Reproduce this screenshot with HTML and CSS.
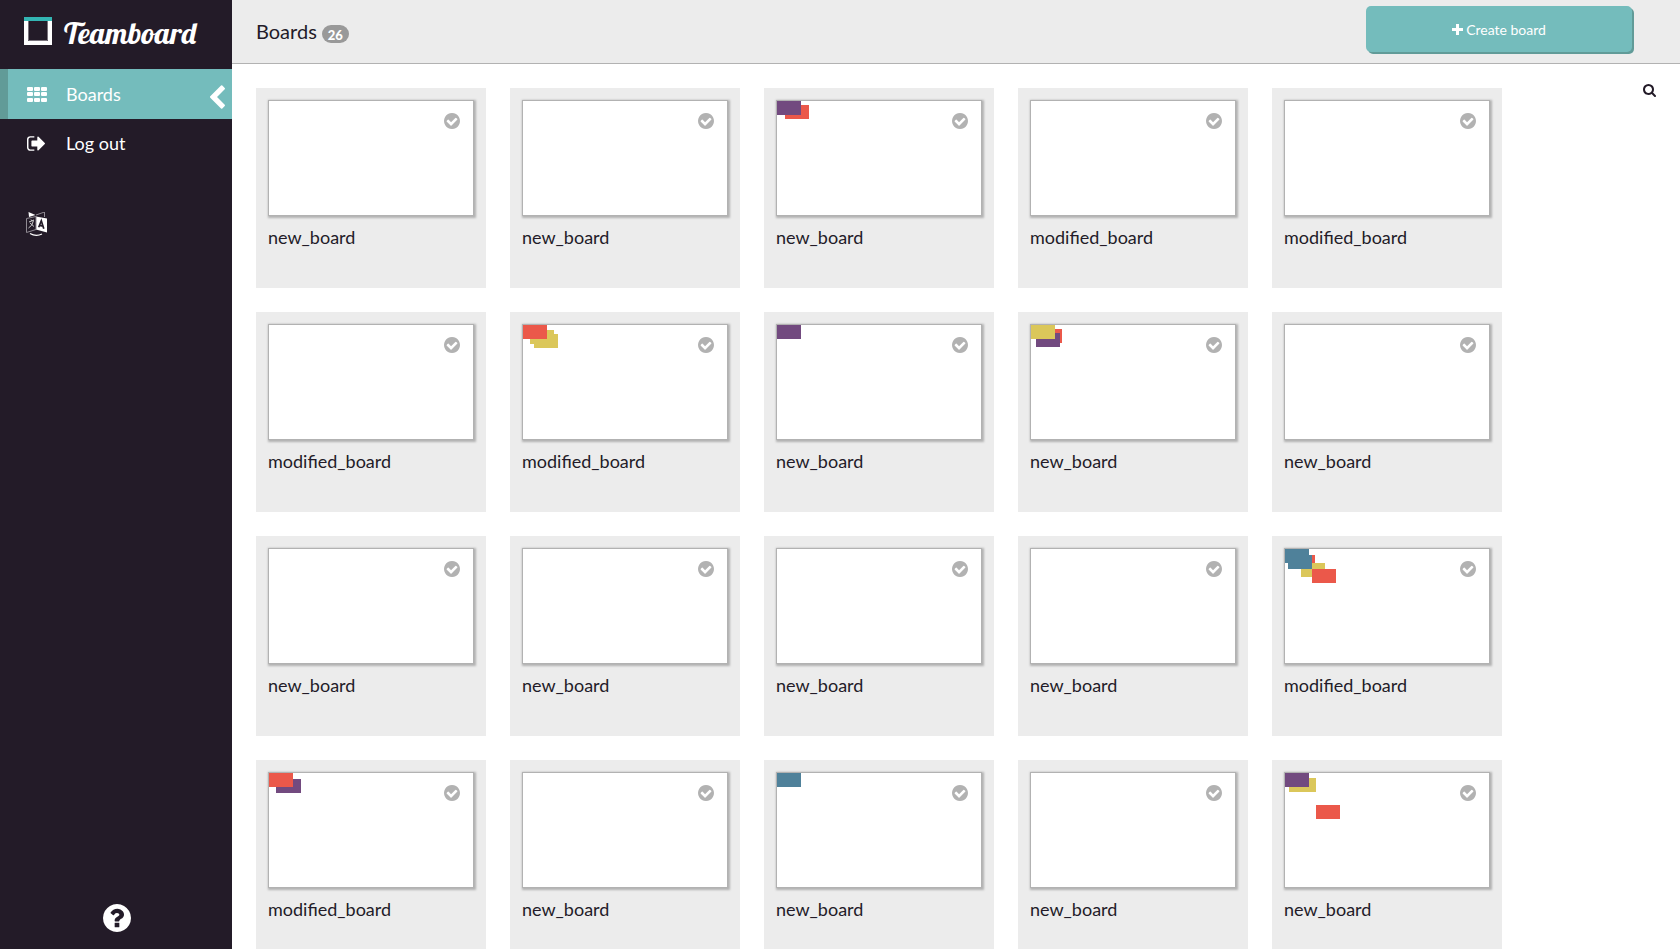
FILE: index.html
```
<!DOCTYPE html>
<html lang="en">
<head>
<meta charset="utf-8">
<title>Teamboard</title>
<link rel="stylesheet" href="styles.css">
</head>
<body>
<svg class="sprite" aria-hidden="true">
  <symbol id="check" viewBox="0 0 1536 1536"><path d="M1284 606q0-28-18-46l-91-90q-19-19-45-19t-45 19l-408 407-226-226q-19-19-45-19t-45 19l-91 90q-18 18-18 46 0 27 18 45l362 362q19 19 45 19 27 0 46-19l543-543q18-18 18-45zm252 162q0 209-103 385.500t-279.500 279.500-385.500 103-385.500-103-279.500-279.500-103-385.500 103-385.500 279.500-279.500 385.500-103 385.500 103 279.500 279.500 103 385.500z"/></symbol>
</svg>
<div class="app">
  <aside class="sidebar">
    <a class="brand" href="#">
      <svg class="brand-mark" viewBox="0 0 28 28" aria-hidden="true"><path fill="#fff" fill-rule="evenodd" d="M0 0h28v28H0zM4 4v20h20V4z"/><path fill="none" stroke="#79737c" d="M4.500 4v19.500h19V4"/><path fill="#33b5b3" d="M0 0h28v4H0z"/></svg>
      <span class="brand-name">Teamboard</span>
    </a>
    <nav class="nav">
      <a class="nav-item active" href="#">
        <span class="nav-icon"><svg width="20" height="15" viewBox="0 0 20 15" aria-hidden="true"><g fill="currentColor"><rect width="6" height="4" rx="1"/><rect x="7" width="6" height="4" rx="1"/><rect x="14" width="6" height="4" rx="1"/><rect y="5" width="6" height="4" rx="1"/><rect x="7" y="5" width="6" height="4" rx="1"/><rect x="14" y="5" width="6" height="4" rx="1"/><rect y="11" width="6" height="4" rx="1"/><rect x="7" y="11" width="6" height="4" rx="1"/><rect x="14" y="11" width="6" height="4" rx="1"/></g></svg></span>
        <span class="nav-label">Boards</span>
        <svg class="chevron" viewBox="410 26 1036 1612" aria-hidden="true"><path fill="currentColor" d="M1427 301l-531 531 531 531q19 19 19 45t-19 45l-166 166q-19 19-45 19t-45-19l-742-742q-19-19-19-45t19-45l742-742q19-19 45-19t45 19l166 166q19 19 19 45t-19 45z"/></svg>
      </a>
      <a class="nav-item" href="#">
        <span class="nav-icon"><svg width="18" height="15" viewBox="64 250 1568 1292" aria-hidden="true"><path fill="currentColor" d="M704 1440q0 4 1 20t.5 26.500-3 23.500-10 19.500-20.500 6.500h-320q-119 0-203.500-84.500t-84.500-203.500v-704q0-119 84.500-203.500t203.500-84.500h320q13 0 22.500 9.500t9.500 22.500q0 4 1 20t.5 26.500-3 23.500-10 19.500-20.500 6.500h-320q-66 0-113 47t-47 113v704q0 66 47 113t113 47h312l11.500 1 11.500 3 8 5.500 7 9 2 13.500zm928-544q0 26-19 45l-544 544q-19 19-45 19t-45-19-19-45v-288h-448q-26 0-45-19t-19-45v-384q0-26 19-45t45-19h448v-288q0-26 19-45t45-19 45 19l544 544q19 19 19 45z"/></svg></span>
        <span class="nav-label">Log out</span>
      </a>
    </nav>
    <button class="language" type="button" aria-label="Language">
      <svg width="21" height="24" viewBox="0 0 21 24" aria-hidden="true"><path fill="#fff" d="M2.500 0 9.500 3 3 5zM10 4.500l11 2V20.500l-11-3z"/><path fill="none" stroke="#8f8a92" d="M10 4.500.5 6.500v14l9.500-3zM10 3l8.500-3v5"/><path fill="none" stroke="#ccc" d="M3 10l5-2M5 7.500l1 1.500M7.500 8.500Q6.500 14 2.500 16M4 11l4 3.500"/><path fill="none" stroke="#fff" stroke-width="1.200" d="M4 21.500q6 3.500 12 .5"/><path fill="none" stroke="#231b28" stroke-width="1.700" d="M12.700 15.200 15.300 8.700l2.500 8M13.500 13.300l3.700.8"/></svg>
    </button>
    <button class="help" type="button" aria-label="Help">
      <svg width="28" height="28" viewBox="0 0 1536 1536" aria-hidden="true"><path fill="currentColor" d="M896 1248v-192q0-14-9-23t-23-9h-192q-14 0-23 9t-9 23v192q0 14 9 23t23 9h192q14 0 23-9t9-23zm256-672q0-88-55.500-163t-138.500-116-170-41q-243 0-371 213-15 24 8 42l132 100q7 6 19 6 16 0 25-12 53-68 86-92 34-24 86-24 48 0 85.500 26t37.500 59q0 38-20 61t-68 45q-63 28-115.500 86.500t-52.500 125.500v36q0 14 9 23t23 9h192q14 0 23-9t9-23q0-19 21.500-49.500t54.500-49.500q32-18 49-28.500t46-35 44.500-48 28-60.500 12.500-81zm384 192q0 209-103 385.500t-279.500 279.500-385.500 103-385.500-103-279.500-279.500-103-385.500 103-385.500 279.500-279.500 385.500-103 385.500 103 279.500 279.500 103 385.500z"/></svg>
    </button>
  </aside>
  <div class="content">
    <header class="topbar">
      <h1 class="title">Boards <span class="badge">26</span></h1>
      <button class="create" type="button"><svg width="11" height="11" viewBox="0 0 11 11" aria-hidden="true"><path fill="none" stroke="currentColor" stroke-width="3" stroke-linejoin="round" d="M5.500 0v11M0 5.500h11"/></svg>Create board</button>
    </header>
    <main class="main">
      <div class="boards" id="boards"></div>
      <button class="search" type="button" aria-label="Search"><svg width="13" height="13" viewBox="64 128 1664 1664" aria-hidden="true"><path fill="currentColor" d="M1216 832q0-185-131.500-316.500t-316.500-131.500-316.500 131.500-131.500 316.500 131.500 316.500 316.500 131.500 316.500-131.500 131.500-316.500zm512 832q0 52-38 90t-90 38q-54 0-90-38l-343-342q-179 124-399 124-143 0-273.500-55.500t-225-150-150-225-55.500-273.500 55.500-273.500 150-225 225-150 273.500-55.500 273.500 55.500 225 150 150 225 55.500 273.500q0 220-124 399l343 343q37 37 37 90z"/></svg></button>
    </main>
  </div>
</div>
<script src="boards.js"></script>
</body>
</html>
```
FILE: styles.css
```
* { box-sizing: border-box; }

body {
  margin: 0;
  font-family: Lato, "Open Sans", sans-serif;
  font-size: 18px;
  color: #231b28;
  background: #fff;
}

button {
  padding: 0;
  border: 0;
  background: none;
  font: inherit;
  color: inherit;
  cursor: pointer;
}

a { color: inherit; text-decoration: none; }
svg { display: block; }

.sprite { position: absolute; width: 0; height: 0; }

.app { display: flex; height: 100vh; }

.sidebar {
  display: flex;
  flex-direction: column;
  flex: none;
  width: 232px;
  background: #231b28;
  color: #fff;
}

.brand {
  display: flex;
  align-items: center;
  gap: 12px;
  height: 69px;
  padding: 0 24px 7px;
}

.brand-mark { width: 28px; height: 28px; }

.brand-name {
  padding-top: 3px;
  font: 30px/40px "Lobster", "Liberation Serif", serif;
}

.nav-item {
  display: flex;
  align-items: center;
  height: 50px;
  padding: 0 7px 0 19px;
  border-left: 8px solid transparent;
}

.nav-item + .nav-item { height: 48px; }

.nav-item.active {
  background: #74bcbc;
  border-left-color: #619b98;
}

.nav-icon { width: 39px; }
.nav-label { flex: 1; }
.chevron { width: 15px; height: 24px; margin-top: 5px; }

.language { align-self: flex-start; margin: 45px 0 0 26px; }
.help { align-self: center; margin: auto 0 17px 1px; }

.content {
  display: flex;
  flex: 1;
  flex-direction: column;
  min-width: 0;
}

.topbar {
  display: flex;
  align-items: flex-start;
  justify-content: space-between;
  flex: none;
  height: 64px;
  padding: 6px 48px 0 24px;
  background: #ececec;
  border-bottom: 1px solid #b2b2b2;
}

.title {
  display: flex;
  align-items: center;
  gap: 5px;
  margin: 13px 0 0;
  font-size: 20px;
  font-weight: 400;
  line-height: 24px;
}

.badge {
  height: 18px;
  margin-top: 6px;
  padding: 1px 6px 0;
  border-radius: 9px;
  background: #999;
  color: #fff;
  font-size: 13px;
  font-weight: 900;
  line-height: 18px;
}

.create {
  display: flex;
  align-items: center;
  justify-content: center;
  gap: 3px;
  width: 266px;
  height: 46px;
  border-radius: 5px;
  background: #74bcbc;
  box-shadow: 2px 2px 0 #619b98;
  color: #fff;
  font-size: 14px;
}

.main {
  display: flex;
  flex: 1;
  align-items: flex-start;
  min-height: 0;
  padding: 0 24px;
  overflow-y: auto;
  scrollbar-width: none;
}

.boards {
  display: grid;
  flex: 1;
  grid-template-columns: repeat(auto-fill, 230px);
  gap: 24px;
  padding: 24px 0;
}

.search { margin-top: 20px; color: #231b28; }

.card {
  height: 200px;
  padding: 12px;
  background: #ececec;
}

.preview {
  position: relative;
  width: 206px;
  height: 116px;
  border: 1px solid #b2b2b2;
  background: #fff;
  box-shadow: 1px 1px 2px 1px #b2b2b2;
}

.name {
  margin: 0;
  padding-top: 9px;
  font-size: 18px;
  font-weight: 400;
  line-height: 24px;
}

.ticket { position: absolute; width: 24px; height: 14px; }
.red { background: #eb584a; }
.violet { background: #724a7f; }
.yellow { background: #dbc75a; }
.blue { background: #4f819a; }

.select {
  position: absolute;
  top: 12px;
  right: 13px;
  color: #b2b2b2;
}
.select svg { width: 16px; height: 16px; fill: currentColor; }
```
FILE: boards.js
```
// Each ticket is [colour, x, y] within the preview, drawn in order.
const N = "new_board";
const M = "modified_board";
const boards = [
  [N], [N], [N, ["red", 8, 4], ["violet", 0, 0]], [M], [M],
  [M], [M, ["yellow", 7, 5], ["yellow", 11, 9], ["red", 0, 0]], [N, ["violet", 0, 0]],
  [N, ["red", 7, 4], ["violet", 5, 8], ["yellow", 0, 0]], [N],
  [N], [N], [N], [N],
  [M, ["red", 6, 6], ["yellow", 16, 14], ["blue", 3, 6], ["blue", 0, 0], ["red", 27, 20]],
  [M, ["violet", 8, 6], ["violet", 7, 6], ["red", 0, 0]], [N], [N, ["blue", 0, 0]], [N],
  [N, ["yellow", 7, 5], ["yellow", 4, 5], ["violet", 0, 0], ["red", 31, 32]],
];

document.getElementById("boards").innerHTML = boards.map(([name, ...tickets]) => `
  <article class="card">
    <div class="preview">
      ${tickets.map(([c, x, y]) => `<span class="ticket ${c}" style="left:${x}px;top:${y}px"></span>`).join("")}
      <button class="select" type="button" aria-label="Select ${name}"><svg><use href="#check"/></svg></button>
    </div>
    <h2 class="name">${name}</h2>
  </article>`).join("");
```
